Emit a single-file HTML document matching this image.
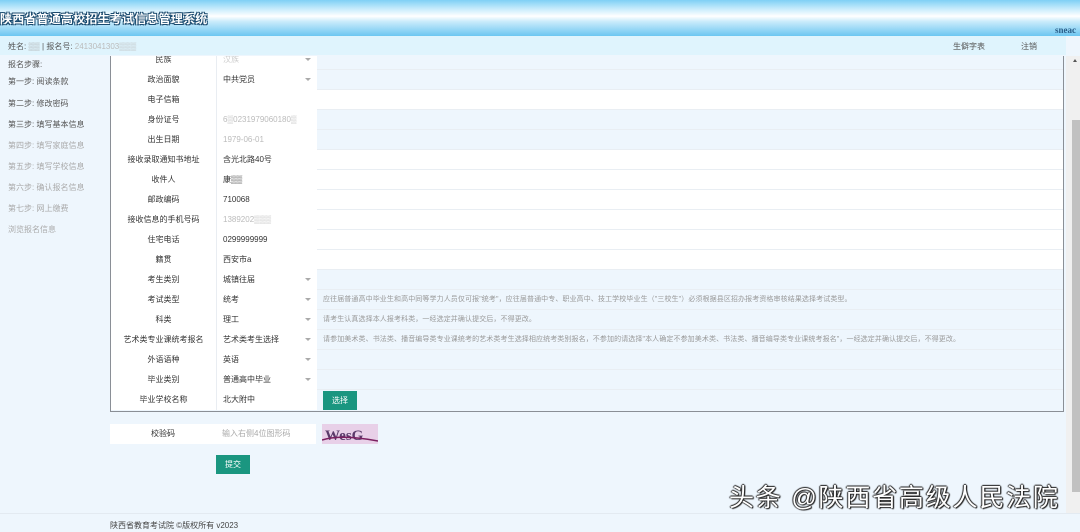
<!DOCTYPE html>
<html style="overflow:hidden;height:532px"><head><meta charset="utf-8"><style>
*{margin:0;padding:0;box-sizing:border-box}
body{width:1080px;height:532px;overflow:hidden;background:#eef6fd;font-family:"Liberation Sans","Noto Sans CJK SC",sans-serif;font-size:8px;color:#333;position:relative}
.a{position:absolute}
#hdr{left:0;top:0;width:1080px;height:36px;background:linear-gradient(#7fd0f5 0%,#d6f1fd 30%,#fff 45%,#c9ebfb 60%,#6cc6f1 100%)}
#title{left:0;top:10px;font-size:12px;font-weight:bold;color:#fff;letter-spacing:0.2px;text-shadow:1px 1px 0 #1a4a6e,-1px -1px 0 #1a4a6e,1px -1px 0 #1a4a6e,-1px 1px 0 #1a4a6e}
#nav{left:0;top:36px;width:1066px;height:19px;background:#dff4fd}
.side{left:8px;font-size:8px;color:#555}
.g{color:#aaa}
#tbl{left:110px;top:56px;width:954px;height:356px;border:1px solid #8a8f96;border-top:none;background:#eef6fd;overflow:hidden}
.row{position:absolute;left:0;height:20px;width:952px;border-bottom:1px solid #e9eef3}
.lab{position:absolute;left:0;width:106px;height:20px;background:#fff;text-align:center;line-height:19px;border-right:1px solid #e9edf2}
.val{position:absolute;left:106px;width:100px;height:20px;background:#fff;line-height:19px;padding-left:6px}
.full{background:#fff}
.arr{position:absolute;left:88px;top:8px;width:0;height:0;border-left:3px solid transparent;border-right:3px solid transparent;border-top:3px solid #aaa}
.hint{position:absolute;left:212px;line-height:19px;color:#999;font-size:7px;white-space:nowrap;letter-spacing:0.1px}
.btn{background:#1a9680;color:#fff;text-align:center}
#sb{left:1066px;top:56px;width:14px;height:457px;background:#f0f0f0}
#thumb{left:1072px;top:120px;width:8px;height:372px;background:#c1c1c1}
#foot{left:0;top:513px;width:1080px;height:19px;background:#eef6fd;border-top:1px solid #e3eaf1}
#wm{left:729px;top:486px;font-size:25px;line-height:25px;color:#fff;letter-spacing:1.8px;white-space:nowrap;text-shadow:1px 1px 1px #222,-1px 0 1px #222,0 -1px 1px #222,1px 0 1px #222}
</style></head><body>
<div id="hdr" class="a"></div>
<div id="title" class="a">陕西省普通高校招生考试信息管理系统</div>
<div class="a" style="right:4px;top:25px;font-size:9px;color:#2a5f8a;font-weight:bold;font-family:'Liberation Serif',serif">sneac</div>
<div id="nav" class="a"></div>
<div class="a" style="left:8px;top:41px;color:#555">姓名: <span style="color:#aaa">▒▒</span> | 报名号: <span style="color:#bbb">2413041303▒▒▒</span></div>
<div class="a" style="left:953px;top:41px;color:#555">生僻字表</div>
<div class="a" style="left:1021px;top:41px;color:#555">注销</div>

<div class="a side" style="top:59px">报名步骤:</div>
<div class="a side" style="top:76px">第一步: 阅读条款</div>
<div class="a side" style="top:98px">第二步: 修改密码</div>
<div class="a side" style="top:119px">第三步: 填写基本信息</div>
<div class="a side g" style="top:140px">第四步: 填写家庭信息</div>
<div class="a side g" style="top:161px">第五步: 填写学校信息</div>
<div class="a side g" style="top:182px">第六步: 确认报名信息</div>
<div class="a side g" style="top:203px">第七步: 网上缴费</div>
<div class="a side g" style="top:224px">浏览报名信息</div>

<div id="tbl" class="a">
<div class="row" style="top:-6px"><div class="lab">民族</div><div class="val" style="color:#ccc">汉族<span class="arr"></span></div></div>
<div class="row" style="top:14px"><div class="lab">政治面貌</div><div class="val">中共党员<span class="arr"></span></div></div>
<div class="row full" style="top:34px"><div class="lab">电子信箱</div><div class="val"></div></div>
<div class="row" style="top:54px"><div class="lab">身份证号</div><div class="val" style="color:#bbb">6▒0231979060180▒</div></div>
<div class="row" style="top:74px"><div class="lab">出生日期</div><div class="val" style="color:#bbb">1979-06-01</div></div>
<div class="row full" style="top:94px"><div class="lab">接收录取通知书地址</div><div class="val">含光北路40号</div></div>
<div class="row full" style="top:114px"><div class="lab">收件人</div><div class="val">康▒▒</div></div>
<div class="row full" style="top:134px"><div class="lab">邮政编码</div><div class="val">710068</div></div>
<div class="row full" style="top:154px"><div class="lab">接收信息的手机号码</div><div class="val" style="color:#bbb">1389202▒▒▒</div></div>
<div class="row full" style="top:174px"><div class="lab">住宅电话</div><div class="val">0299999999</div></div>
<div class="row full" style="top:194px"><div class="lab">籍贯</div><div class="val">西安市a</div></div>
<div class="row" style="top:214px"><div class="lab">考生类别</div><div class="val">城镇往届<span class="arr"></span></div></div>
<div class="row" style="top:234px"><div class="lab">考试类型</div><div class="val">统考<span class="arr"></span></div><div class="hint">应往届普通高中毕业生和高中同等学力人员仅可报"统考"，应往届普通中专、职业高中、技工学校毕业生（"三校生"）必须根据县区招办报考资格审核结果选择考试类型。</div></div>
<div class="row" style="top:254px"><div class="lab">科类</div><div class="val">理工<span class="arr"></span></div><div class="hint">请考生认真选择本人报考科类，一经选定并确认提交后，不得更改。</div></div>
<div class="row" style="top:274px"><div class="lab">艺术类专业课统考报名</div><div class="val">艺术类考生选择<span class="arr"></span></div><div class="hint">请参加美术类、书法类、播音编导类专业课统考的艺术类考生选择相应统考类别报名，不参加的请选择"本人确定不参加美术类、书法类、播音编导类专业课统考报名"，一经选定并确认提交后，不得更改。</div></div>
<div class="row" style="top:294px"><div class="lab">外语语种</div><div class="val">英语<span class="arr"></span></div></div>
<div class="row" style="top:314px"><div class="lab">毕业类别</div><div class="val">普通高中毕业<span class="arr"></span></div></div>
<div class="row" style="top:334px;border-bottom:none"><div class="lab">毕业学校名称</div><div class="val">北大附中</div><div class="a btn" style="left:212px;top:1px;width:34px;height:19px;line-height:19px">选择</div></div>
</div>

<div class="a" style="left:110px;top:424px;width:106px;height:20px;background:#fff;text-align:center;line-height:20px">校验码</div>
<div class="a" style="left:216px;top:424px;width:100px;height:20px;background:#fff;line-height:20px;padding-left:6px;color:#aaa">输入右侧4位图形码</div>
<div class="a" style="left:322px;top:424px;width:56px;height:20px;background:#e8d0e8;overflow:hidden"><svg width="56" height="20"><text x="3" y="16" font-family="Liberation Serif" font-size="15" font-weight="bold" fill="#5a3a6a">WesG</text><path d="M0 16 Q20 10 56 17" stroke="#7a2060" stroke-width="1.5" fill="none"/></svg></div>
<div class="a btn" style="left:216px;top:455px;width:34px;height:19px;line-height:19px">提交</div>

<div id="sb" class="a"></div>
<div class="a" style="left:1073px;top:59px;width:0;height:0;border-left:2px solid transparent;border-right:2px solid transparent;border-bottom:3px solid #555"></div>
<div id="thumb" class="a"></div>
<div id="foot" class="a"></div>
<div class="a" style="left:110px;top:520px;color:#444">陕西省教育考试院 ©版权所有 v2023</div>
<div id="wm" class="a">头条 @陕西省高级人民法院</div>
</body></html>
